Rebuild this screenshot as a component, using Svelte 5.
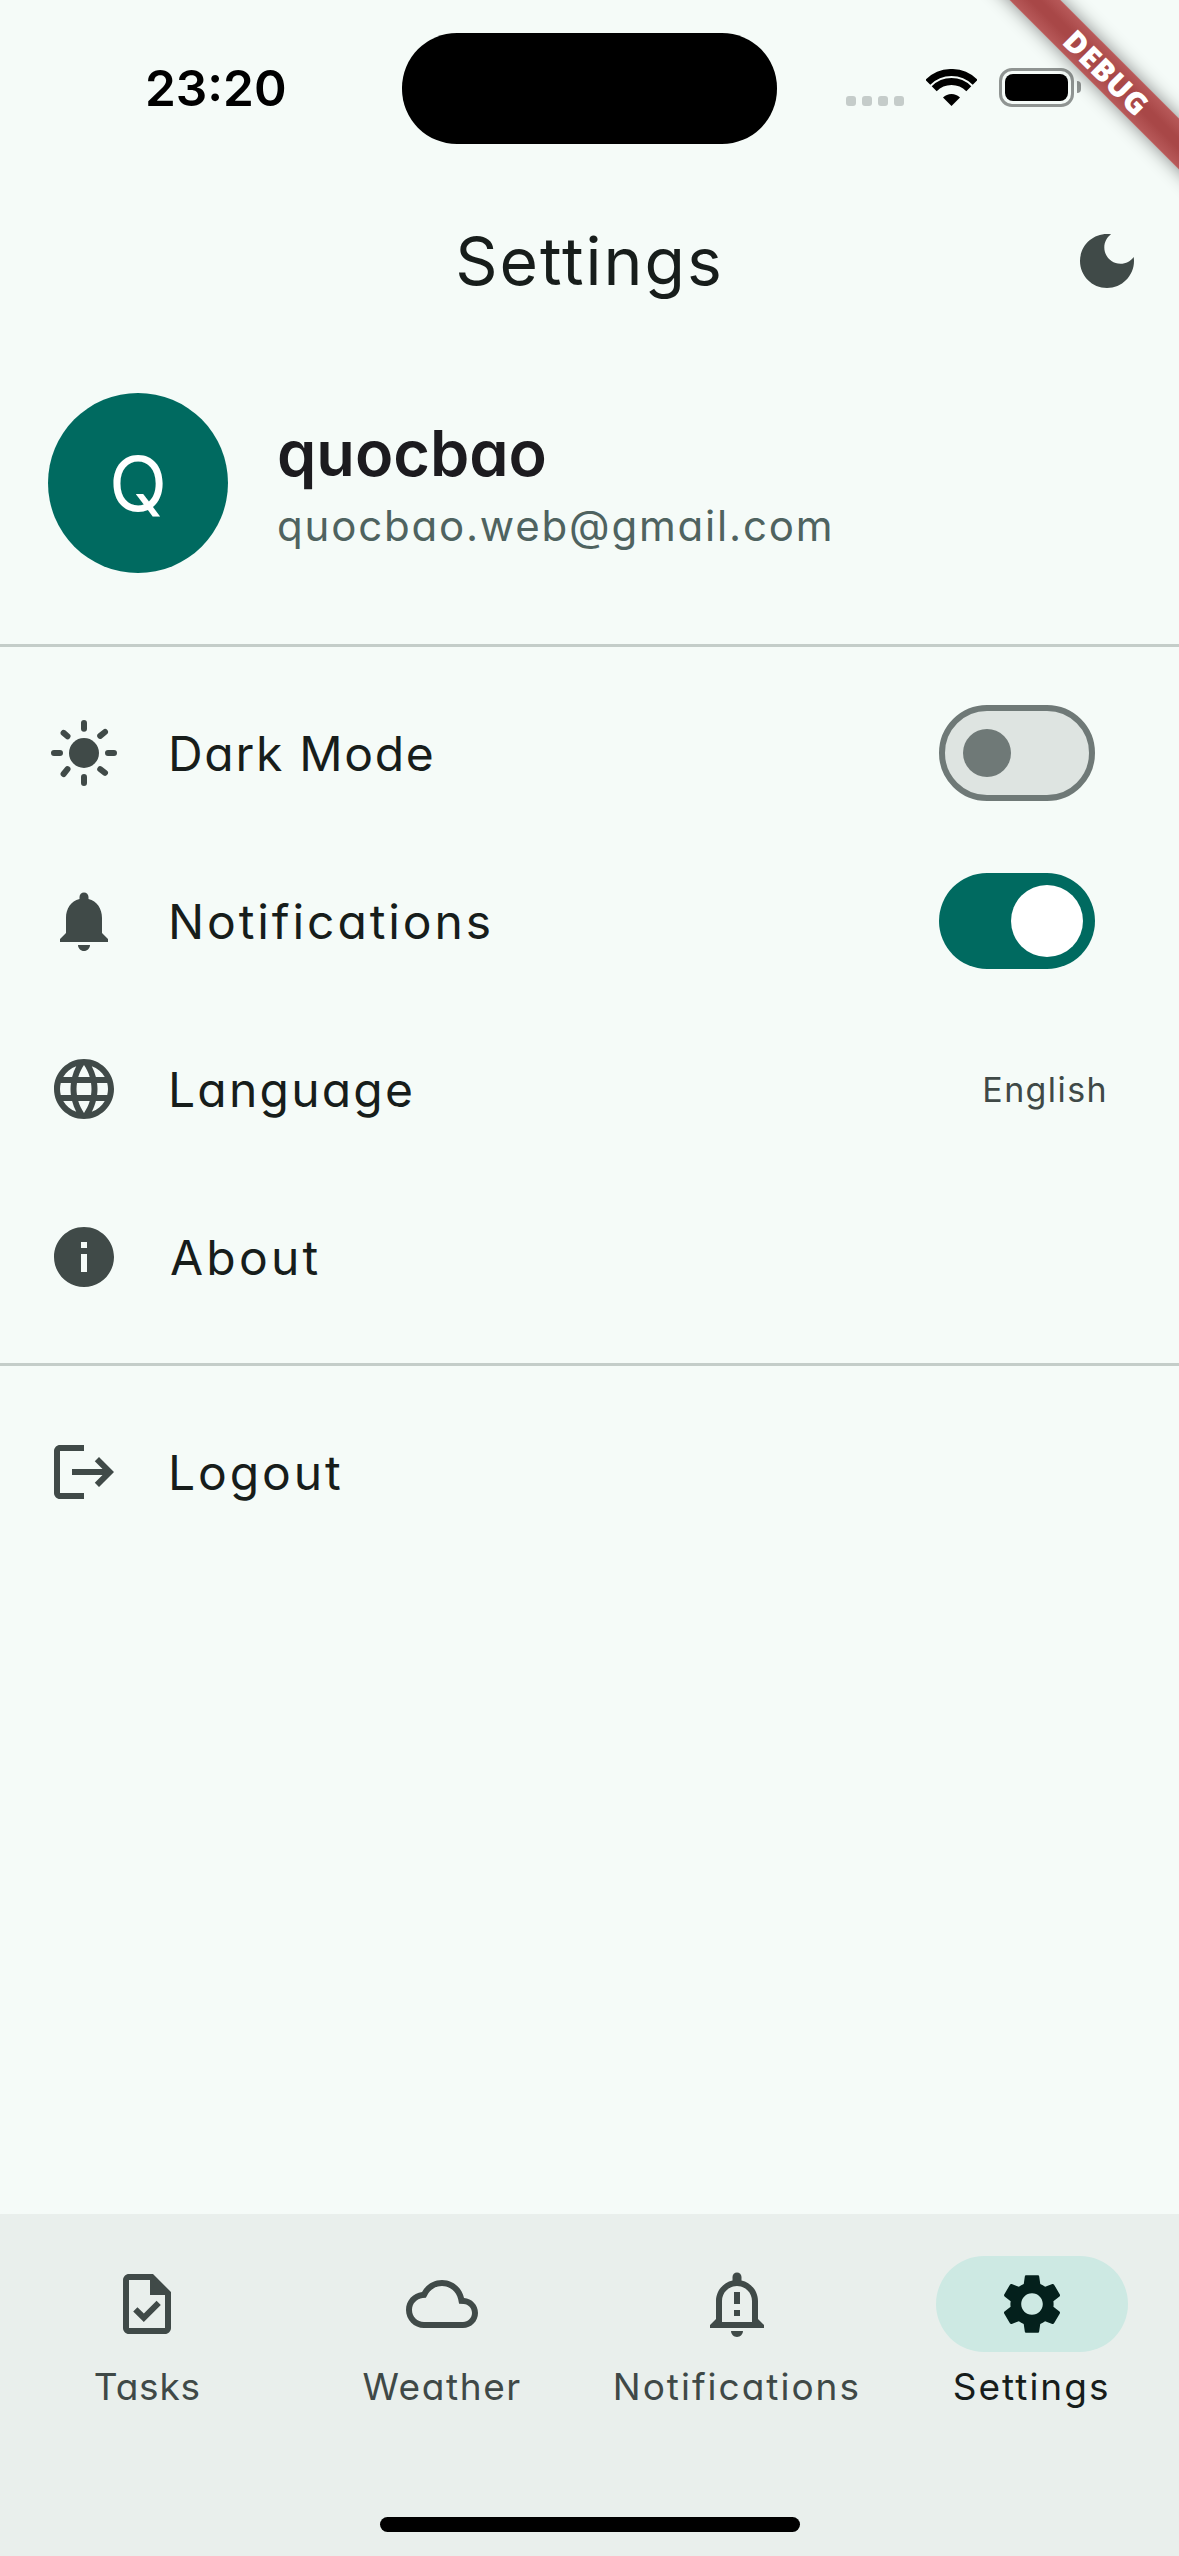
<script>
  const P = {
    bell: 'M12 22c1.1 0 2-.9 2-2h-4c0 1.1.89 2 2 2zm6-6v-5c0-3.07-1.64-5.64-4.5-6.32V4c0-.83-.67-1.5-1.5-1.5s-1.5.67-1.5 1.5v.68C7.63 5.36 6 7.92 6 11v5l-2 2v1h16v-1l-2-2z',
    globe: 'M11.99 2C6.47 2 2 6.48 2 12s4.47 10 9.99 10C17.52 22 22 17.52 22 12S17.52 2 11.99 2zm6.93 6h-2.95c-.32-1.25-.78-2.45-1.38-3.56 1.84.63 3.37 1.91 4.33 3.56zM12 4.04c.83 1.2 1.48 2.53 1.91 3.96h-3.82c.43-1.43 1.08-2.76 1.91-3.96zM4.26 14C4.1 13.36 4 12.69 4 12s.1-1.36.26-2h3.38c-.08.66-.14 1.32-.14 2 0 .68.06 1.34.14 2H4.26zm.82 2h2.95c.32 1.25.78 2.45 1.38 3.56-1.84-.63-3.37-1.9-4.33-3.56zm2.95-8H5.08c.96-1.66 2.49-2.93 4.33-3.56C8.81 5.55 8.35 6.75 8.03 8zM12 19.96c-.83-1.2-1.48-2.53-1.91-3.96h3.82c-.43 1.43-1.08 2.76-1.91 3.96zM14.34 14H9.66c-.09-.66-.16-1.32-.16-2 0-.68.07-1.35.16-2h4.68c.09.65.16 1.32.16 2 0 .68-.07 1.34-.16 2zm.25 5.56c.6-1.11 1.06-2.31 1.38-3.56h2.95c-.96 1.65-2.49 2.93-4.33 3.56zM16.36 14c.08-.66.14-1.32.14-2 0-.68-.06-1.34-.14-2h3.38c.16.64.26 1.31.26 2s-.1 1.36-.26 2h-3.38z',
    info: 'M12 2C6.48 2 2 6.48 2 12s4.48 10 10 10 10-4.48 10-10S17.52 2 12 2zm1 15h-2v-6h2v6zm0-8h-2V7h2v2z',
    logout: 'M17 7l-1.41 1.41L18.17 11H8v2h10.17l-2.58 2.58L17 17l5-5zM4 5h8V3H4c-1.1 0-2 .9-2 2v14c0 1.1.9 2 2 2h8v-2H4V5z',
    moon: 'M12 3c-4.97 0-9 4.03-9 9s4.03 9 9 9 9-4.03 9-9c0-.46-.04-.92-.1-1.36-.98 1.37-2.58 2.26-4.4 2.26-2.98 0-5.4-2.42-5.4-5.4 0-1.81.89-3.42 2.26-4.4-.44-.06-.9-.1-1.36-.1z',
    task: 'M14 2H6c-1.1 0-1.99.9-1.99 2L4 20c0 1.1.89 2 1.99 2H18c1.1 0 2-.9 2-2V8l-6-6zm4 18H6V4h7v5h5v11zm-9.18-6.95L7.4 14.46 10.94 18l5.66-5.66-1.41-1.41-4.24 4.24-2.13-2.12z',
    cloud: 'M12 6c2.62 0 4.88 1.86 5.39 4.43l.3 1.5 1.53.11c1.56.1 2.78 1.41 2.78 2.96 0 1.65-1.35 3-3 3H6c-2.21 0-4-1.79-4-4 0-2.05 1.53-3.76 3.56-3.97l1.07-.11.5-.95C8.08 7.14 9.94 6 12 6m0-2C9.11 4 6.6 5.64 5.35 8.04 2.34 8.36 0 10.91 0 14c0 3.31 2.69 6 6 6h13c2.76 0 5-2.24 5-5 0-2.64-2.05-4.78-4.65-4.96C18.67 6.59 15.64 4 12 4z',
    alert: 'M10.01 21.01c0 1.1.89 1.99 1.99 1.99s1.99-.89 1.99-1.99h-3.98zM12 6c2.76 0 5 2.24 5 5v7H7v-7c0-2.76 2.24-5 5-5zm0-4.5c-.83 0-1.5.67-1.5 1.5v1.17C7.36 4.85 5 7.65 5 11v6l-2 2v1h18v-1l-2-2v-6c0-3.35-2.36-6.15-5.5-6.83V3c0-.83-.67-1.5-1.5-1.5zM11 8h2v4h-2zm0 6h2v2h-2z',
    gear: 'M19.14 12.94c.04-.3.06-.61.06-.94 0-.32-.02-.64-.07-.94l2.03-1.58c.18-.14.23-.41.12-.61l-1.92-3.32c-.12-.22-.37-.29-.59-.22l-2.39.96c-.5-.38-1.03-.7-1.62-.94l-.36-2.54c-.04-.24-.24-.41-.48-.41h-3.84c-.24 0-.43.17-.47.41l-.36 2.54c-.59.24-1.13.57-1.62.94l-2.39-.96c-.22-.08-.47 0-.59.22L2.74 8.87c-.12.21-.08.47.12.61l2.03 1.58c-.05.3-.09.63-.09.94s.02.64.07.94l-2.03 1.58c-.18.14-.23.41-.12.61l1.92 3.32c.12.22.37.29.59.22l2.39-.96c.5.38 1.03.7 1.62.94l.36 2.54c.05.24.24.41.48.41h3.84c.24 0 .44-.17.47-.41l.36-2.54c.59-.24 1.13-.56 1.62-.94l2.39.96c.22.08.47 0 .59-.22l1.92-3.32c.12-.22.07-.47-.12-.61l-2.01-1.58zM12 15.6c-1.98 0-3.6-1.62-3.6-3.6s1.62-3.6 3.6-3.6 3.6 1.62 3.6 3.6-1.62 3.6-3.6 3.6z'
  };
  const nav = [
    { label: 'Tasks', icon: P.task, cls: 'narrow' },
    { label: 'Weather', icon: P.cloud, cls: '' },
    { label: 'Notifications', icon: P.alert, cls: 'wide' },
    { label: 'Settings', icon: P.gear, cls: 'wide', active: true }
  ];
</script>

<div class="app">
  <div class="status">
    <div class="time">23:20</div>
    <div class="island"></div>
    <div class="sys">
      <div class="dots"><i></i><i></i><i></i><i></i></div>
      <svg class="wifi" viewBox="0 0 51 37" width="51" height="37">
        <path d="M1.8 13.3A33.5 33.5 0 0 1 49.2 13.3" fill="none" stroke="#000" stroke-width="7" />
        <path d="M8.2 19.7A24.5 24.5 0 0 1 42.8 19.7" fill="none" stroke="#000" stroke-width="7" />
        <path d="M25.5 37L17 28.5A12 12 0 0 1 34 28.5Z" fill="#000" />
      </svg>
      <div class="battery"><div class="cell"></div></div>
      <div class="nub"></div>
    </div>
  </div>

  <header class="head">
    <span></span>
    <h1>Settings</h1>
    <svg class="ic" viewBox="0 0 24 24"><path d={P.moon} /></svg>
  </header>

  <section class="profile">
    <div class="avatar">Q</div>
    <div class="who">
      <div class="name">quocbao</div>
      <div class="mail">quocbao.web@gmail.com</div>
    </div>
  </section>

  <div class="rule"></div>

  <section class="group">
    <div class="row">
      <svg class="ic" viewBox="0 0 24 24">
        <circle cx="12" cy="12" r="5" />
        <g class="rays">
          <path d="M2 12h2M20 12h2M12 2v1.9M12 20v2M5.2 5.3l1.3 1.1M17.4 17.4l1.6 1.2M19 5l-1.6 1.3M6.5 17.4l-1.3 1.6" />
        </g>
      </svg>
      <span class="lbl dark">Dark Mode</span>
      <div class="switch off"><div class="thumb"></div></div>
    </div>
    <div class="row">
      <svg class="ic" viewBox="0 0 24 24"><path d={P.bell} /></svg>
      <span class="lbl notif">Notifications</span>
      <div class="switch on"><div class="thumb"></div></div>
    </div>
    <div class="row">
      <svg class="ic" viewBox="0 0 24 24"><path d={P.globe} /></svg>
      <span class="lbl lang">Language</span>
      <span class="val">English</span>
    </div>
    <div class="row">
      <svg class="ic" viewBox="0 0 24 24"><path d={P.info} /></svg>
      <span class="lbl about">About</span>
    </div>
  </section>

  <div class="rule"></div>

  <section class="group">
    <div class="row">
      <svg class="ic" viewBox="0 0 24 24"><path d={P.logout} /></svg>
      <span class="lbl out">Logout</span>
    </div>
  </section>

  <div class="grow"></div>

  <nav class="nav">
    {#each nav as item}
      <div class="tab" class:active={item.active}>
        <div class="pill">
          <svg class="ic" viewBox="0 0 24 24"><path d={item.icon} /></svg>
        </div>
        <div class="tablbl {item.cls}">{item.label}</div>
      </div>
    {/each}
  </nav>

  <div class="home"></div>
  <div class="banner"><span>DEBUG</span></div>
</div>

<style>
  :global(body) {
    margin: 0;
    background: #f5fbf8;
  }
  .app {
    position: relative;
    width: 1179px;
    height: 2556px;
    overflow: hidden;
    display: flex;
    flex-direction: column;
    background: #f5fbf8;
    color: #171d1b;
    font-family: Inter, "Noto Sans", sans-serif;
    font-feature-settings: "cv11" 1;
  }
  .status {
    height: 225px;
    flex: none;
    display: flex;
    align-items: flex-start;
    padding-left: 145px;
    box-sizing: border-box;
  }
  .time {
    width: 257px;
    margin-top: 58px;
    font-size: 49.5px;
    line-height: 60px;
    font-weight: 600;
    color: #000;
    font-feature-settings: normal;
  }
  .island {
    width: 375px;
    height: 111px;
    margin-top: 33px;
    border-radius: 55px;
    background: #000;
  }
  .sys {
    display: flex;
    align-items: flex-start;
    margin-left: 69px;
    margin-top: 68px;
  }
  .dots {
    display: flex;
    gap: 6px;
    margin-top: 28px;
  }
  .dots i {
    width: 10px;
    height: 10px;
    border-radius: 3px;
    background: #c5ccca;
  }
  .wifi {
    margin-left: 22px;
    margin-top: 1px;
  }
  .battery {
    width: 75px;
    height: 39px;
    margin-left: 22px;
    box-sizing: border-box;
    border: 3px solid #8f9492;
    border-radius: 13px;
    padding: 3px;
  }
  .cell {
    height: 100%;
    border-radius: 8px;
    background: #000;
  }
  .nub {
    width: 4px;
    height: 12px;
    margin-left: 3px;
    margin-top: 13px;
    border-radius: 0 6px 6px 0;
    background: #8f9492;
  }
  .head {
    flex: none;
    display: grid;
    grid-template-columns: 1fr auto 1fr;
    align-items: center;
    height: 72px;
    padding-right: 36px;
    padding-left: 36px;
  }
  .head .ic {
    justify-self: end;
  }
  h1 {
    margin: 0;
    font-size: 66px;
    line-height: 72px;
    font-weight: 400;
    letter-spacing: 2px;
  }
  .ic {
    width: 72px;
    height: 72px;
    flex: none;
    display: block;
    fill: #404a48;
  }
  .rays path {
    fill: none;
    stroke: #404a48;
    stroke-width: 2;
    stroke-linecap: round;
  }
  .profile {
    flex: none;
    display: flex;
    align-items: center;
    gap: 49px;
    padding: 96px 48px 71px;
  }
  .avatar {
    width: 180px;
    height: 180px;
    border-radius: 50%;
    background: #006a60;
    color: #fff;
    display: flex;
    align-items: center;
    justify-content: center;
    font-size: 76px;
  }
  .who {
    padding-top: 4px;
  }
  .name {
    font-size: 63px;
    line-height: 74px;
    font-weight: 600;
    color: #1c1b1f;
  }
  .mail {
    margin-top: 8px;
    font-size: 42px;
    line-height: 56px;
    letter-spacing: 1.8px;
    color: #4f6360;
  }
  .rule {
    flex: none;
    height: 3px;
    background: #c4cdc9;
  }
  .group {
    flex: none;
    padding: 22px 0;
  }
  .row {
    height: 168px;
    display: flex;
    align-items: center;
    padding-left: 48px;
  }
  .lbl {
    flex: 1;
    margin-left: 48px;
    font-size: 48px;
    letter-spacing: 2.4px;
  }
  .dark {
    letter-spacing: 1.7px;
  }
  .notif {
    letter-spacing: 2.9px;
  }
  .lang {
    letter-spacing: 2.2px;
  }
  .about {
    margin-left: 50px;
    letter-spacing: 3.2px;
  }
  .out {
    letter-spacing: 2.9px;
  }
  .val {
    margin-right: 71px;
    font-size: 34px;
    letter-spacing: 1.4px;
    color: #3f4947;
  }
  .switch {
    width: 156px;
    height: 96px;
    margin-right: 84px;
    border-radius: 48px;
    box-sizing: border-box;
    display: flex;
    align-items: center;
  }
  .off {
    background: #dee4e1;
    border: 6px solid #6f7977;
    padding-left: 18px;
  }
  .off .thumb {
    width: 48px;
    height: 48px;
    border-radius: 50%;
    background: #6f7977;
  }
  .on {
    background: #006a60;
    justify-content: flex-end;
    padding-right: 12px;
  }
  .on .thumb {
    width: 72px;
    height: 72px;
    border-radius: 50%;
    background: #fff;
  }
  .grow {
    flex: 1;
  }
  .nav {
    flex: none;
    height: 342px;
    box-sizing: border-box;
    padding-top: 42px;
    display: grid;
    grid-template-columns: repeat(4, 1fr);
    background: #e9efec;
  }
  .tab {
    display: flex;
    flex-direction: column;
    align-items: center;
    min-width: 0;
  }
  .pill {
    width: 192px;
    height: 96px;
    border-radius: 48px;
    display: flex;
    align-items: center;
    justify-content: center;
  }
  .tablbl {
    margin-top: 11px;
    font-size: 37px;
    line-height: 48px;
    letter-spacing: 1.6px;
    color: #3f4947;
    white-space: nowrap;
  }
  .narrow {
    letter-spacing: 0.8px;
  }
  .wide {
    letter-spacing: 2px;
  }
  .active .pill {
    background: #cde9e3;
  }
  .active .ic {
    fill: #04201c;
  }
  .active .tablbl {
    color: #171d1b;
  }
  .home {
    position: absolute;
    left: 380px;
    top: 2517px;
    width: 420px;
    height: 15px;
    border-radius: 8px;
    background: #000;
  }
  .banner {
    position: absolute;
    left: 947px;
    top: 54px;
    width: 320px;
    height: 36px;
    transform: rotate(45deg);
    display: flex;
    align-items: center;
    justify-content: center;
    background: linear-gradient(#b85a5a, #a84747 40%, #a84747 60%, #b85a5a);
    box-shadow: 0 0 18px rgba(0, 0, 0, 0.45);
    color: #fff;
    font-family: "Open Sans", sans-serif;
    font-weight: 800;
    font-size: 30px;
    letter-spacing: 0.5px;
    font-feature-settings: normal;
  }
</style>
